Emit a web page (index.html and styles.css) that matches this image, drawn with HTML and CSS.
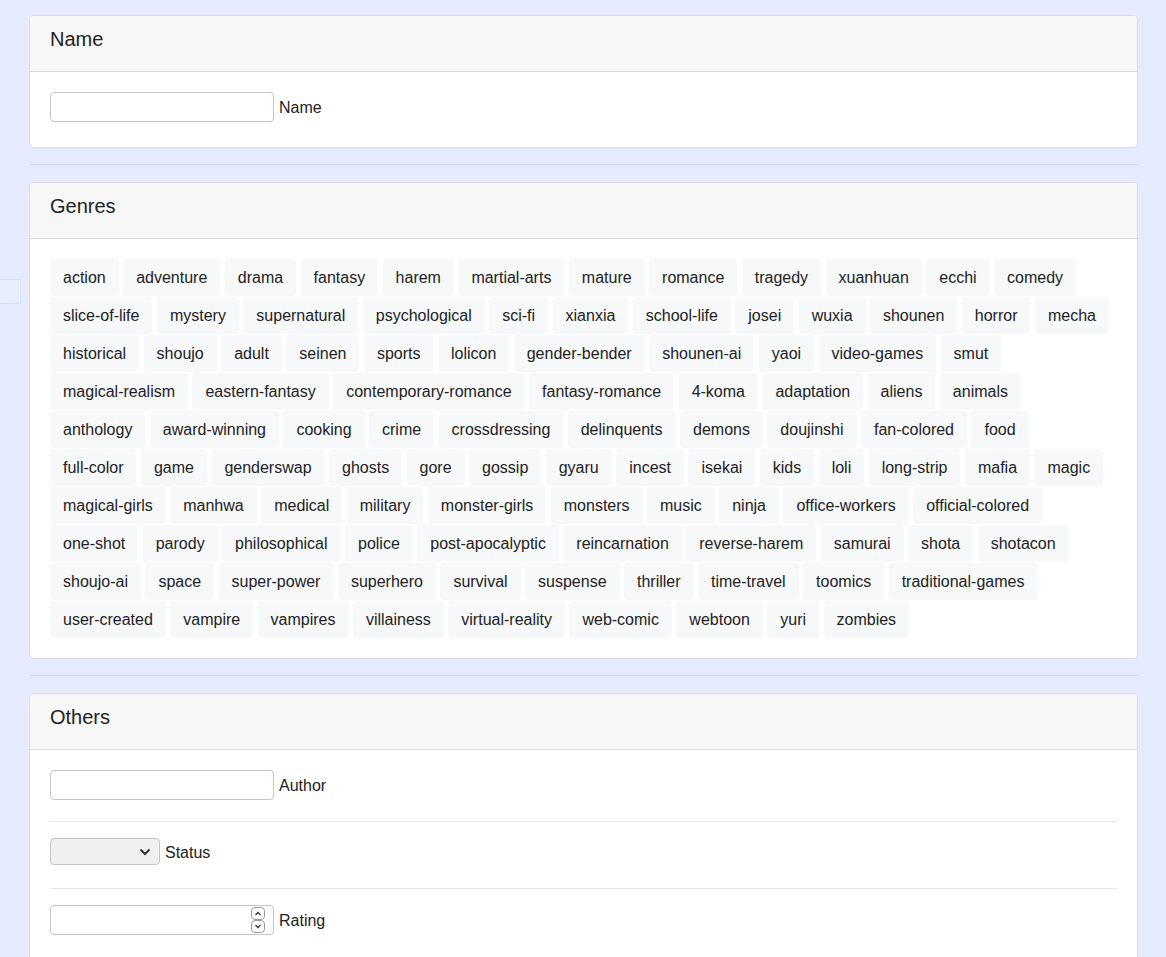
FILE: index.html
```html
<!DOCTYPE html>
<html lang="en">
<head>
<meta charset="utf-8">
<title>Search</title>
<link rel="stylesheet" href="styles.css">
</head>
<body>
<div class="edge-tab"></div>
<main class="page">
  <section class="card">
    <header class="card-header">Name</header>
    <div class="card-body">
      <div class="field">
        <input class="text-input" type="text">
        <label class="field-label">Name</label>
      </div>
    </div>
  </section>

  <hr class="sep">

  <section class="card">
    <header class="card-header">Genres</header>
    <div class="card-body">
      <div class="tags">
        <span class="tag">action</span><span class="tag">adventure</span><span class="tag">drama</span><span class="tag">fantasy</span><span class="tag">harem</span><span class="tag">martial-arts</span><span class="tag">mature</span><span class="tag">romance</span><span class="tag">tragedy</span><span class="tag">xuanhuan</span><span class="tag">ecchi</span><span class="tag">comedy</span>
        <span class="tag">slice-of-life</span><span class="tag">mystery</span><span class="tag">supernatural</span><span class="tag">psychological</span><span class="tag">sci-fi</span><span class="tag">xianxia</span><span class="tag">school-life</span><span class="tag">josei</span><span class="tag">wuxia</span><span class="tag">shounen</span><span class="tag">horror</span><span class="tag">mecha</span>
        <span class="tag">historical</span><span class="tag">shoujo</span><span class="tag">adult</span><span class="tag">seinen</span><span class="tag">sports</span><span class="tag">lolicon</span><span class="tag">gender-bender</span><span class="tag">shounen-ai</span><span class="tag">yaoi</span><span class="tag">video-games</span><span class="tag">smut</span>
        <span class="tag">magical-realism</span><span class="tag">eastern-fantasy</span><span class="tag">contemporary-romance</span><span class="tag">fantasy-romance</span><span class="tag">4-koma</span><span class="tag">adaptation</span><span class="tag">aliens</span><span class="tag">animals</span>
        <span class="tag">anthology</span><span class="tag">award-winning</span><span class="tag">cooking</span><span class="tag">crime</span><span class="tag">crossdressing</span><span class="tag">delinquents</span><span class="tag">demons</span><span class="tag">doujinshi</span><span class="tag">fan-colored</span><span class="tag">food</span>
        <span class="tag">full-color</span><span class="tag">game</span><span class="tag">genderswap</span><span class="tag">ghosts</span><span class="tag">gore</span><span class="tag">gossip</span><span class="tag">gyaru</span><span class="tag">incest</span><span class="tag">isekai</span><span class="tag">kids</span><span class="tag">loli</span><span class="tag">long-strip</span><span class="tag">mafia</span><span class="tag">magic</span>
        <span class="tag">magical-girls</span><span class="tag">manhwa</span><span class="tag">medical</span><span class="tag">military</span><span class="tag">monster-girls</span><span class="tag">monsters</span><span class="tag">music</span><span class="tag">ninja</span><span class="tag">office-workers</span><span class="tag">official-colored</span>
        <span class="tag">one-shot</span><span class="tag">parody</span><span class="tag">philosophical</span><span class="tag">police</span><span class="tag">post-apocalyptic</span><span class="tag">reincarnation</span><span class="tag">reverse-harem</span><span class="tag">samurai</span><span class="tag">shota</span><span class="tag">shotacon</span>
        <span class="tag">shoujo-ai</span><span class="tag">space</span><span class="tag">super-power</span><span class="tag">superhero</span><span class="tag">survival</span><span class="tag">suspense</span><span class="tag">thriller</span><span class="tag">time-travel</span><span class="tag">toomics</span><span class="tag">traditional-games</span>
        <span class="tag">user-created</span><span class="tag">vampire</span><span class="tag">vampires</span><span class="tag">villainess</span><span class="tag">virtual-reality</span><span class="tag">web-comic</span><span class="tag">webtoon</span><span class="tag">yuri</span><span class="tag">zombies</span>
      </div>
    </div>
  </section>

  <hr class="sep">

  <section class="card">
    <header class="card-header">Others</header>
    <div class="card-body">
      <div class="field">
        <input class="text-input" type="text">
        <label class="field-label">Author</label>
      </div>
      <hr class="row-sep">
      <div class="field field-select">
        <div class="select-wrap">
          <select class="select"><option></option></select>
          <svg class="chevron" width="12" height="8" viewBox="0 0 12 8"><path d="M1.5 1.5 L6 6 L10.5 1.5" fill="none" stroke="#333" stroke-width="2"/></svg>
        </div>
        <label class="field-label">Status</label>
      </div>
      <hr class="row-sep">
      <div class="field">
        <div class="number-wrap">
          <input class="text-input number-input" type="number">
          <svg class="spinner" width="14" height="26" viewBox="0 0 14 26">
            <rect x="0.5" y="0.5" width="13" height="12" rx="3.5" fill="#fff" stroke="#9a9a9a"/>
            <rect x="0.5" y="13.5" width="13" height="12" rx="3.5" fill="#fff" stroke="#9a9a9a"/>
            <path d="M4.5 8 L7 5.5 L9.5 8" fill="none" stroke="#333" stroke-width="1.3"/>
            <path d="M4.5 18 L7 20.5 L9.5 18" fill="none" stroke="#333" stroke-width="1.3"/>
          </svg>
        </div>
        <label class="field-label">Rating</label>
      </div>
    </div>
  </section>
</main>
</body>
</html>
```

FILE: styles.css
```css
html, body {
  margin: 0;
  padding: 0;
}
body {
  background: #e6ecfd;
  font-family: "Liberation Sans", Arial, sans-serif;
  font-size: 16px;
  color: #222;
  position: relative;
}
.edge-tab {
  position: absolute;
  left: -1px;
  top: 279px;
  width: 20px;
  height: 23px;
  border: 1px solid #d9dff0;
  background: #e8eefd;
}
.page {
  margin-left: 29px;
  width: 1109px;
  padding-top: 15px;
}
.card {
  background: #fff;
  border: 1px solid #dcdcdc;
  border-radius: 4px;
  overflow: hidden;
}
.card-header {
  background: #f7f7f7;
  border-bottom: 1px solid #dcdcdc;
  padding: 11px 20px 20px;
  font-size: 20px;
  line-height: 24px;
  color: #222;
}
.card-body {
  padding: 20px;
}
.field {
  display: flex;
  align-items: flex-start;
  gap: 5px;
  height: 35px;
}
.field-select {
  height: 34px;
}
.field-label {
  line-height: 31px;
  font-size: 16px;
  color: #222;
}
.field-select .field-label {
  line-height: 29px;
}
.text-input {
  box-sizing: border-box;
  width: 224px;
  height: 30px;
  margin: 0;
  border: 1px solid #c4c4c4;
  border-radius: 4px;
  background: #fff;
  font: inherit;
  padding: 2px 6px;
}
.number-wrap {
  position: relative;
  width: 224px;
  height: 30px;
}
.number-input {
  -moz-appearance: textfield;
}
.number-input::-webkit-inner-spin-button,
.number-input::-webkit-outer-spin-button {
  -webkit-appearance: none;
  margin: 0;
}
.spinner {
  position: absolute;
  right: 9px;
  top: 2px;
  pointer-events: none;
}
.select-wrap {
  position: relative;
  width: 110px;
  height: 27px;
}
.select {
  appearance: none;
  -webkit-appearance: none;
  box-sizing: border-box;
  width: 110px;
  height: 27px;
  margin: 0;
  border: 1px solid #c4c4c4;
  border-radius: 4px;
  background: #eff0f2;
  font: inherit;
}
.chevron {
  position: absolute;
  right: 9px;
  top: 10px;
  pointer-events: none;
}
.sep {
  border: 0;
  border-top: 1px solid #cfd6e6;
  margin: 16px 0 17px;
}
.row-sep {
  border: 0;
  border-top: 1px solid #e5e5e5;
  margin: 16px 0;
}
.tags {
  display: flex;
  flex-wrap: wrap;
  column-gap: 4.45px;
  row-gap: 1px;
}
.tag {
  display: inline-block;
  background: #f6f8fa;
  border-radius: 4px;
  padding: 1px 13px 0;
  height: 36px;
  line-height: 36px;
  font-size: 16px;
  color: #222;
  white-space: nowrap;
}
```
